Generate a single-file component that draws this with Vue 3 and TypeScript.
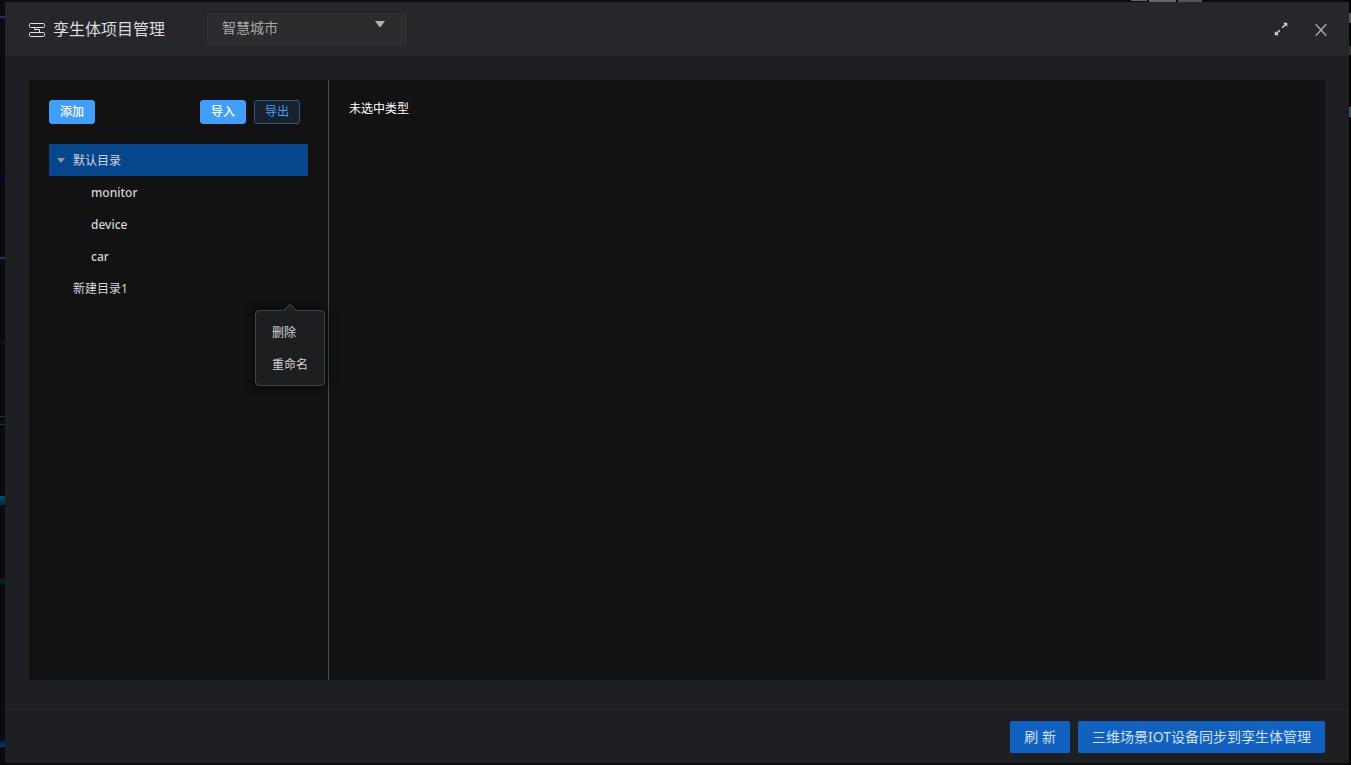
<script setup lang="ts">
import { ref } from 'vue'

interface TreeFolder {
  name: string
  children: string[]
}

const projects: string[] = ['智慧城市']
const project = ref<string>(projects[0])
const folders: TreeFolder[] = [
  { name: '默认目录', children: ['monitor', 'device', 'car'] },
  { name: '新建目录1', children: [] },
]
const selected = ref<string>('默认目录')
const menuOwner = ref<string>('新建目录1')
const menuItems: string[] = ['删除', '重命名']
</script>

<template>
  <div class="backdrop">
    <section class="dialog" role="dialog" aria-labelledby="dialog-title">
      <header class="head">
        <svg class="logo" viewBox="0 0 16 14" aria-hidden="true">
          <rect x="0.5" y="0.5" width="15" height="4" rx="1" />
          <rect x="0.5" y="9.5" width="15" height="4" rx="1" />
          <path d="M5.5 4.5V6.5H10.5V9.5" />
        </svg>
        <h1 id="dialog-title">孪生体项目管理</h1>
        <div class="picker">
          <select v-model="project" aria-label="项目">
            <option v-for="p in projects" :key="p" :value="p">{{ p }}</option>
          </select>
          <svg class="caret" viewBox="0 0 10 6" aria-hidden="true"><path d="M0 0H10L6 5.5Q5 6.5 4 5.5Z" /></svg>
        </div>
        <div class="tools">
          <button type="button" aria-label="全屏">
            <svg class="expand" viewBox="0 0 14 14" aria-hidden="true">
              <path class="fill" d="M9.2 0.8H13.2V4.8ZM0.8 9.2V13.2H4.8Z" />
              <path d="M11.8 2.2L8.2 5.8M2.2 11.8L5.8 8.2" />
            </svg>
          </button>
          <button type="button" aria-label="关闭">
            <svg class="close" viewBox="0 0 12 14" aria-hidden="true">
              <path d="M0.8 2.3L6 8L11.2 2.3M0.8 13.7L6 8L11.2 13.7" />
            </svg>
          </button>
        </div>
      </header>

      <main class="body">
        <aside class="side">
          <div class="actions">
            <button type="button" class="small">添加</button>
            <button type="button" class="small import">导入</button>
            <button type="button" class="small plain">导出</button>
          </div>
          <ul class="tree">
            <li v-for="folder in folders" :key="folder.name" class="folder">
              <button
                type="button"
                class="node"
                :class="{ active: selected === folder.name }"
                @click="selected = folder.name"
              >
                <span class="arrow">
                  <svg v-if="folder.children.length" viewBox="0 0 8 5" aria-hidden="true"><path d="M0 0H8L4 5Z" /></svg>
                </span>
                {{ folder.name }}
              </button>
              <ul v-if="folder.children.length">
                <li v-for="child in folder.children" :key="child">
                  <button type="button" class="node leaf" @click="selected = child">{{ child }}</button>
                </li>
              </ul>
              <div v-if="menuOwner === folder.name" class="menu">
                <button v-for="item in menuItems" :key="item" type="button">{{ item }}</button>
              </div>
            </li>
          </ul>
        </aside>
        <div class="detail">未选中类型</div>
      </main>

      <footer class="foot">
        <button type="button">刷 新</button>
        <button type="button">三维场景IOT设备同步到孪生体管理</button>
      </footer>
    </section>
  </div>
</template>

<style>
body {
  margin: 0;
  background: #0b0b0b;
}
</style>

<style scoped>
.backdrop {
  box-sizing: border-box;
  min-height: 100vh;
  padding: 2px 2px 2px 5px;
  display: flex;
  font-family: "Noto Sans", "Noto Sans CJK SC", sans-serif;
  background:
    linear-gradient(#0b3875, #0b3875) 0 16px / 5px 2px no-repeat,
    linear-gradient(#050528, #050528) 0 174px / 5px 7px no-repeat,
    linear-gradient(#123a68, #123a68) 0 257px / 5px 2px no-repeat,
    linear-gradient(#092b2d, #092b2d) 0 342px / 5px 1px no-repeat,
    linear-gradient(#0d3554, #0d3554) 0 416px / 5px 1px no-repeat,
    linear-gradient(#0d3554, #0d3554) 0 424px / 5px 1px no-repeat,
    linear-gradient(#064e79, #052a44) 0 496px / 5px 9px no-repeat,
    linear-gradient(#031c22, #031c22) 0 578px / 5px 6px no-repeat,
    linear-gradient(#051c30, #07346c) 0 740px / 5px 7px no-repeat,
    linear-gradient(#666, #666) 1131px 0 / 16px 1px no-repeat,
    linear-gradient(#666, #666) 1149px 0 / 27px 2px no-repeat,
    linear-gradient(#555, #555) 1178px 0 / 24px 2px no-repeat,
    linear-gradient(#5a5060, #5a5060) 100% 13px / 2px 10px no-repeat,
    linear-gradient(#333, #333) 100% 46px / 2px 9px no-repeat,
    linear-gradient(#215862, #215862) 100% 107px / 2px 10px no-repeat,
    linear-gradient(#020203, #020203) 100% 0 / 2px 100% no-repeat,
    #0b0b0b;
}

button,
select {
  font-family: inherit;
  margin: 0;
  border: 0;
  cursor: pointer;
}

ul {
  list-style: none;
  margin: 0;
  padding: 0;
}

svg {
  display: block;
  fill: none;
}

.dialog {
  flex: 1;
  display: flex;
  flex-direction: column;
  background: #1e1f23;
  border-radius: 2px;
  overflow: hidden;
}

.head {
  display: flex;
  align-items: center;
  height: 54px;
  padding: 0 20px 0 24px;
  background: #26272b;
}

.logo {
  width: 16px;
  height: 14px;
  margin: 2px 8px 0 0;
  stroke: #e2e2e2;
}

h1 {
  margin: 0 42px 0 0;
  font-size: 16px;
  line-height: 24px;
  font-weight: 400;
  color: #dcdcdd;
}

.picker {
  position: relative;
  width: 200px;
}

.picker select {
  display: block;
  appearance: none;
  width: 100%;
  height: 32px;
  padding: 0 32px 3px 15px;
  border-radius: 2px;
  background: #2c2c2d;
  color: #a8a8a9;
  font-size: 14px;
}

.caret {
  position: absolute;
  top: 8px;
  right: 22px;
  width: 10px;
  height: 6px;
  fill: #b0b0b1;
  pointer-events: none;
}

.tools {
  display: flex;
  align-items: center;
  gap: 24px;
  margin-left: auto;
}

.tools button {
  padding: 0;
  width: 16px;
  height: 16px;
  display: grid;
  place-items: center;
  background: none;
}

.expand {
  width: 14px;
  height: 14px;
  stroke: #d4d4d5;
  stroke-width: 1.6;
}

.expand .fill {
  fill: #e0e0e0;
  stroke: none;
}

.close {
  width: 12px;
  height: 14px;
  stroke: #b2b2b4;
  stroke-width: 1.3;
}

.body {
  flex: 1;
  display: flex;
  margin: 24px 24px 30px;
  background: #121212;
}

.side {
  box-sizing: border-box;
  width: 300px;
  padding: 20px 20px 0;
  border-right: 1px solid #4c4c4c;
}

.actions {
  display: flex;
  gap: 8px;
  padding-right: 8px;
  margin-bottom: 20px;
}

.small {
  box-sizing: border-box;
  height: 24px;
  padding: 0 10px;
  border: 1px solid #409eff;
  border-radius: 3px;
  background: #409eff;
  color: #fff;
  font-size: 12px;
  line-height: 20px;
  font-weight: 500;
}

.import {
  margin-left: auto;
}

.plain {
  border-color: #2a598a;
  background: #18222c;
  color: #409eff;
  font-weight: 400;
}

.folder {
  position: relative;
}

.node {
  display: flex;
  align-items: center;
  width: 100%;
  height: 32px;
  padding: 0;
  background: none;
  color: #d4d5d8;
  font-size: 12px;
  text-align: left;
}

.node.active {
  background: #05468c;
}

.leaf {
  padding-left: 42px;
  font-weight: 500;
}

.arrow {
  width: 16px;
  padding-left: 8px;
}

.arrow svg {
  width: 8px;
  height: 5px;
  fill: #929497;
}

.menu {
  position: absolute;
  z-index: 1;
  top: 38px;
  right: -17px;
  padding: 5px 0;
  border: 1px solid #414243;
  border-radius: 4px;
  background: #1d1e1f;
  box-shadow: 0 0 12px rgba(0, 0, 0, 0.72);
}

.menu::before {
  content: "";
  position: absolute;
  top: -5px;
  left: 50%;
  width: 8px;
  height: 8px;
  margin-left: -5px;
  border: 1px solid #414243;
  border-right-color: transparent;
  border-bottom-color: transparent;
  background: #1d1e1f;
  transform: rotate(45deg);
}

.menu button {
  position: relative;
  display: block;
  width: 100%;
  height: 32px;
  padding: 0 16px;
  background: none;
  color: #d4d5d8;
  font-size: 12px;
  text-align: left;
}

.detail {
  flex: 1;
  padding: 20px;
  font-size: 12px;
  line-height: 18px;
  color: #fff;
}

.foot {
  display: flex;
  justify-content: flex-end;
  gap: 8px;
  padding: 10px 24px;
  border-top: 1px solid #26272b;
}

.foot button {
  height: 32px;
  padding: 0 14px 2px;
  border-radius: 2px;
  background: #1162c0;
  color: #d3e0f2;
  font-size: 14px;
}
</style>
